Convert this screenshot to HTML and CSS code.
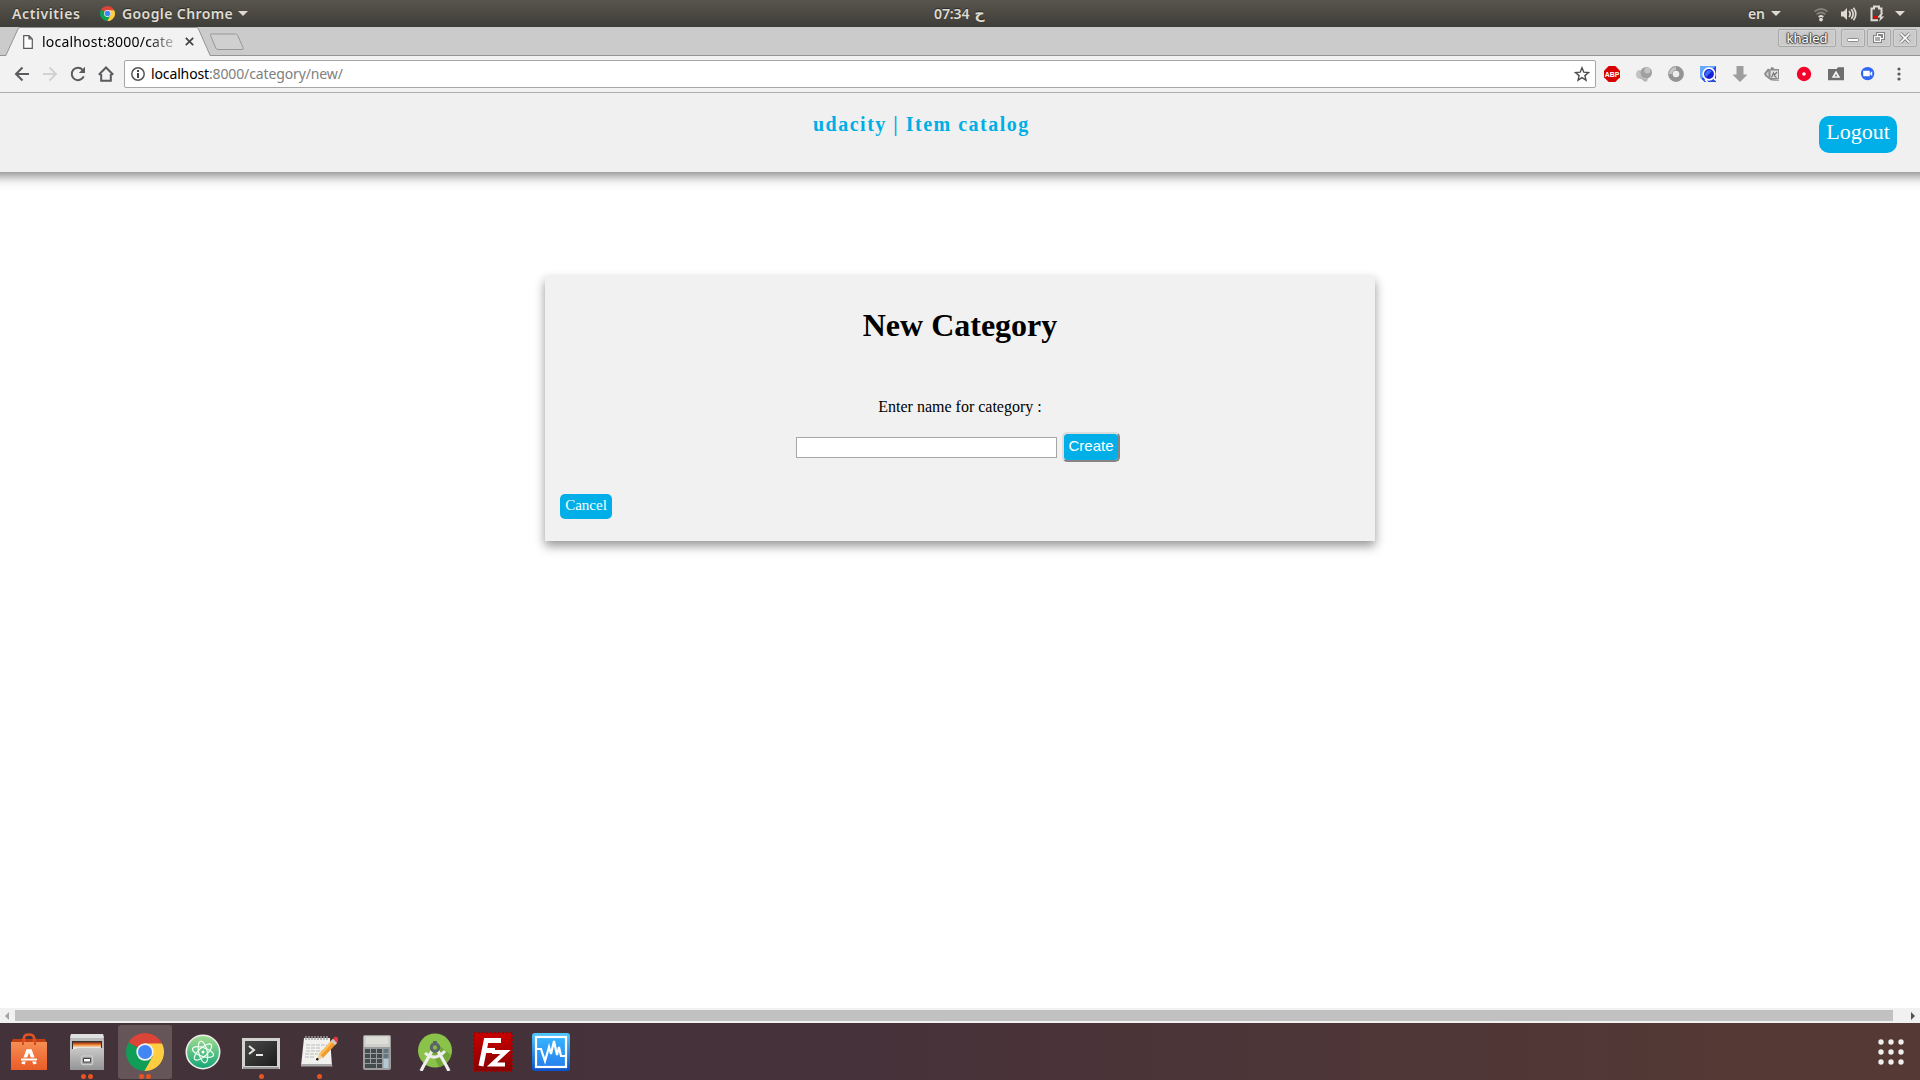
FILE: index.html
```html
<!DOCTYPE html>
<html lang="en">
<head>
<meta charset="utf-8">
<title>Item catalog</title>
<link rel="stylesheet" href="styles.css">
</head>
<body>
<svg width="0" height="0" class="defs">
  <defs>
    <symbol id="chrome" viewBox="0 0 38 38">
      <path d="M19 19 2.6 9.5A19 19 0 0 1 35.4 9.5z" fill="#db4437"/>
      <path d="M19 19 2.6 9.5A19 19 0 0 0 19 38L27.2 23.8z" fill="#0f9d58"/>
      <path d="M19 10.5h17A19 19 0 0 1 18.5 38L26.6 23.5z" fill="#ffcd40"/>
      <circle cx="19" cy="19" r="8.7" fill="#f1f1f1"/>
      <circle cx="19" cy="19" r="7" fill="#4285f4"/>
    </symbol>
    <linearGradient id="orange" x2="0" y2="1"><stop stop-color="#f58e55"/><stop offset=".7" stop-color="#ee6a33"/><stop offset="1" stop-color="#e85d28"/></linearGradient>
    <linearGradient id="silver" x2="0" y2="1"><stop stop-color="#c9c9c9"/><stop offset="1" stop-color="#949494"/></linearGradient>
    <linearGradient id="atom" x2="0" y2="1"><stop stop-color="#a5dd92"/><stop offset="1" stop-color="#12a676"/></linearGradient>
    <linearGradient id="screen" x2="1" y2="1"><stop stop-color="#484848"/><stop offset=".5" stop-color="#333"/><stop offset="1" stop-color="#1d1d1d"/></linearGradient>
    <linearGradient id="red" x2="0" y2="1"><stop stop-color="#c90000"/><stop offset="1" stop-color="#870000"/></linearGradient>
    <linearGradient id="blue" x2="0" y2="1"><stop stop-color="#35b4ff"/><stop offset="1" stop-color="#2580ed"/></linearGradient>
    <linearGradient id="blueEdge" x2="0" y2="1"><stop stop-color="#50c8ff"/><stop offset="1" stop-color="#0b50c8"/></linearGradient>
  </defs>
</svg>

<header class="panel">
  <div class="panel-left">
    <span class="activities">Activities</span>
    <svg class="app-icon" width="15" height="15"><use href="#chrome"/></svg>
    <span class="app-name">Google Chrome</span>
    <i class="caret"></i>
  </div>
  <div class="clock"><span class="time">07:34</span><span class="meridiem">ح</span></div>
  <div class="tray">
    <span class="lang">en</span><i class="caret"></i>
    <svg class="wifi" width="16" height="16" viewBox="0 0 16 16" fill="none" stroke-width="1.8"><path d="M1.5 5.6Q8 .5 14.5 5.6M3.6 8.4Q8 4.7 12.4 8.4" stroke="#85827c"/><path d="M5.7 11Q8 9 10.3 11" stroke="#dfdbd2"/><circle cx="8" cy="13.6" r="1.9" fill="#dfdbd2"/></svg>
    <svg class="sound" width="17" height="16" viewBox="0 0 17 16"><path d="M1 5.5h2.5L7 2v12L3.5 10.5H1z" fill="#dfdbd2"/><path d="M9 5q2.500 3 0 6M11.300 3.300q3.700 4.700 0 9.400M13.500 1.700q4.600 6.300 0 12.600" fill="none" stroke="#dfdbd2" stroke-width="1.700"/></svg>
    <svg class="battery" width="15" height="17" viewBox="0 0 15 17"><path d="M8 15.200H1.500V3.500H4V1.500h5v2h2.500V8" fill="none" stroke="#dfdbd2" stroke-width="2"/><path d="M3 11h4v2.500H3z" fill="#e00000"/><path d="M11 8 7.500 12.500h2.800L9 16.800l5.300-5.200h-3L13 8z" fill="#dfdbd2"/></svg>
    <i class="caret"></i>
  </div>
</header>

<div class="tabstrip">
  <div class="tab">
    <svg class="tab-shape" width="208" height="29" viewBox="0 0 208 29"><path d="M0 29V28.500Q1 28.500 1.500 27L13 2Q13.500.5 15 .5H191Q193 .5 193.500 2L204.500 27Q205 28.500 206 28.500V29z" fill="#f2f2f2" stroke="#949494"/><path d="M1.500 28.500h203" stroke="#f2f2f2" stroke-width="1.200"/></svg>
    <div class="tab-content">
      <svg width="10" height="14" viewBox="0 0 10 14"><path d="M.7.700H6L9.300 4v9.300H.7zM6 .7V4h3.300" fill="#fff" stroke="#5a5a5a" stroke-width="1.200"/></svg>
      <span class="tab-title">localhost:8000/cate</span>
      <svg class="tab-close" width="9" height="9" viewBox="0 0 9 9"><path d="M.8.800l7.400 7.400M8.200.8.800 8.200" stroke="#444" stroke-width="1.700"/></svg>
    </div>
  </div>
  <svg class="new-tab" width="36" height="18" viewBox="0 0 36 18"><path d="M2.500 1h24q1.500 0 2.200 1.500L34 14.500q.7 2-1 2H9q-1.500 0-2.200-1.500L1.500 2.500Q1 1 2.500 1z" fill="#d0d0d0" stroke="#989898"/></svg>
  <div class="window-buttons">
    <span class="user">khaled</span>
    <span class="wbtn"><svg width="12" height="12" viewBox="0 0 12 12"><rect x=".5" y="6.500" width="11" height="3" rx="1" fill="#fff" stroke="#8b8b8b"/></svg></span>
    <span class="wbtn"><svg width="12" height="12" viewBox="0 0 12 12" fill="none"><path d="M4.500 1.500h6v5h-6zM1.500 4.500h6v5h-6z" stroke="#858585" stroke-width="3"/><path d="M4.500 1.500h6v5h-6z" stroke="#fff"/><path d="M1.500 4.500h6v5h-6z" fill="#aaa" stroke="#fff"/></svg></span>
    <span class="wbtn"><svg width="12" height="12" viewBox="0 0 12 12"><path d="M1.500 1.500l9 9m0-9-9 9" stroke="#808080" stroke-width="3.400"/><path d="M1.500 1.500l9 9m0-9-9 9" stroke="#fff" stroke-width="1.700"/></svg></span>
  </div>
</div>

<div class="toolbar">
  <div class="nav">
    <svg width="16" height="16" viewBox="0 0 16 16"><path d="M8.500 1.500 2 8l6.500 6.500M2 8h13" fill="none" stroke="#5a5a5f" stroke-width="2"/></svg>
    <svg width="16" height="16" viewBox="0 0 16 16"><path d="M7.500 1.500 14 8l-6.500 6.500M14 8H1" fill="none" stroke="#d2d2d2" stroke-width="2"/></svg>
    <svg width="16" height="16" viewBox="0 0 16 16"><path d="M13.700 10.300A6.200 6.200 0 1 1 12.600 3.800" fill="none" stroke="#5a5a5f" stroke-width="2"/><path d="M15 .8V7H8.800z" fill="#5a5a5f"/></svg>
    <svg width="16" height="16" viewBox="0 0 16 16"><path d="M.8 8.700 8 1.500l7.200 7.200M3.200 8v6.700h9.600V8" fill="none" stroke="#5a5a5f" stroke-width="2"/></svg>
  </div>
  <div class="omnibox">
    <svg width="14" height="14" viewBox="0 0 14 14"><circle cx="7" cy="7" r="6.200" fill="none" stroke="#555" stroke-width="1.500"/><path d="M6 6h2v5H6zM6 3h2v2H6z" fill="#444"/></svg>
    <span class="url"><b>localhost</b>:8000/category/new/</span>
    <svg class="star" width="16" height="16" viewBox="0 0 16 16"><path d="M8 1.800 9.800 6.200l4.700.4-3.600 3 1.100 4.600L8 11.700l-4 2.500 1.100-4.600-3.600-3 4.700-.4z" fill="none" stroke="#4d4d4d" stroke-width="1.400"/></svg>
  </div>
  <div class="extensions">
    <svg viewBox="0 0 16 16"><path d="M4.700 0h6.600L16 4.700v6.600L11.300 16H4.700L0 11.300V4.700z" fill="#d90000"/><text x="8" y="10.800" text-anchor="middle" class="abp" textLength="14.600" lengthAdjust="spacingAndGlyphs">ABP</text></svg>
    <svg viewBox="0 0 16 16"><path d="M0 8.500Q0 4 4 4l5 3-1 6q-8 1-8-4.500z" fill="#c3c3c3"/><circle cx="10.300" cy="6.600" r="5.700" fill="#a0a0a0"/><circle cx="11.300" cy="4.500" r="3" fill="#c5c5c5"/><path d="M2 9l5 3.500 5-.5-1 3.500H8z" fill="#b5b5b5"/></svg>
    <svg viewBox="0 0 16 16"><circle cx="8" cy="8" r="5.600" fill="#eee" stroke="#949494" stroke-width="4.600"/><path d="M2.500 8A5.500 5.500 0 0 1 8 2.500" fill="none" stroke="#c6c6c6" stroke-width="3"/></svg>
    <svg viewBox="0 0 16 16"><path d="M0 0h16v16H0z" fill="#2649e0"/><path d="M0 0h16L0 14z" fill="#68a8fa"/><circle cx="9" cy="8" r="5.800" fill="#1a22d8" stroke="#fff" stroke-width="1.700"/><path d="M5 9Q5 4 10 4l2 1-6 6z" fill="#3b6ff4"/><path d="M0 11.500 4.500 16H0z" fill="#fff"/><path d="M5 13.500 7.500 16M13.500 12l2.500 2.500" stroke="#fff" stroke-width="1.700"/></svg>
    <svg viewBox="0 0 16 16"><path d="M4.500 0h7v8.500h4L8 16 .5 8.500h4z" fill="#9d9d9d"/></svg>
    <svg viewBox="0 0 16 16"><path d="M0 7.500 4 2.500l2 1L7.500 1l2 .5.8 1.500H15v10l-8 1.500L1 10z" fill="#8c8c8c"/><path d="M6.500 4.500H14v7.500H6.500z" fill="#e1e1e1"/><path d="M7.500 11.500 9.500 7l1 2 2.500-3M10 9.500l2.500 2" fill="none" stroke="#777" stroke-width="1.200"/><path d="M2 8 4.500 5v6z" fill="#d2d2d2"/><path d="M8 13.500h7V15H9z" fill="#aaa"/></svg>
    <svg viewBox="0 0 16 16"><circle cx="8" cy="8" r="7.200" fill="#f4042b"/><circle cx="8" cy="8" r="1.800" fill="#fff"/></svg>
    <svg viewBox="0 0 16 16"><path d="M0 14.300V3h8.500l1.500-1.800h6v13.100z" fill="#6e6e6e"/><path d="M8 6.200 5.200 11h5.600z" fill="none" stroke="#f4f4f4" stroke-width="1.700"/></svg>
    <svg viewBox="0 0 16 16"><circle cx="7.600" cy="7.600" r="6.700" fill="#3165f4"/><path d="M3.200 4.700h5.800q.8 0 .8.800v4.800H4q-.8 0-.8-.8zM10.200 7l2-1.800v4.900l-2-1.800z" fill="#fff"/></svg>
  </div>
  <svg class="menu" width="4" height="14" viewBox="0 0 4 14" fill="#5a5a5a"><circle cx="2" cy="2" r="1.600"/><circle cx="2" cy="7" r="1.600"/><circle cx="2" cy="12" r="1.600"/></svg>
</div>

<div class="viewport">
  <div class="site-header">
    <div class="brand">udacity | Item catalog</div>
    <a class="logout">Logout</a>
  </div>
  <main class="card">
    <h1>New Category</h1>
    <p>Enter name for category :</p>
    <form class="form"><input type="text"><button type="button">Create</button></form>
    <a class="cancel">Cancel</a>
  </main>
</div>
<div class="scrollbar"><i class="arrow left"></i><div class="thumb"></div><i class="arrow right"></i></div>

<footer class="dock">
  <div class="launcher"><svg viewBox="0 0 38 38"><path d="M3 6h32l2 4H1z" fill="#c43f12"/><path d="M14 11V5q0-3.500 5-3.500T24 5v6" fill="none" stroke="#df5425" stroke-width="2.600"/><path d="M1 9h36v28H1z" fill="url(#orange)"/><path d="M13 5v7M25 5v7" stroke="#d94b1c" stroke-width="2"/><path d="M13 31 17.700 18h2.600L25 31" fill="none" stroke="#fff" stroke-width="3.600"/><path d="M11 26.500h16" stroke="#ee6a33" stroke-width="4"/><path d="M11 26.500h16" stroke="#fff" stroke-width="2"/></svg></div>
  <div class="launcher"><svg viewBox="0 0 38 38"><path d="M3 1h32l1 6v30H2V7z" fill="#bcbcbc"/><path d="M3 1h32l1 4H2z" fill="#e0e0e0"/><path d="M4 8h30v9H4z" fill="#36302c"/><path d="M5 9.500h28v2.500H5z" fill="#c9501a"/><path d="M5 11.500h28V14H5z" fill="#f4a256"/><path d="M5 13.500h28V16H5z" fill="#eae6df"/><path d="M2 16h6l1-1h25l2 1v21H2z" fill="url(#silver)"/><rect x="13.500" y="23" width="11" height="8.500" rx="1.500" fill="#999" stroke="#ccc" stroke-width="1.500"/><path d="M15.500 25.500h7v3.500h-7z" fill="#fff" stroke="#444"/></svg><span class="dots"><i></i><i></i></span></div>
  <div class="launcher active"><svg viewBox="0 0 38 38"><use href="#chrome"/></svg><span class="dots"><i></i><i></i></span></div>
  <div class="launcher"><svg viewBox="0 0 38 38"><circle cx="19" cy="19" r="16.700" fill="url(#atom)" stroke="#eee" stroke-width="1.600"/><g fill="none" stroke="#f2fff4" stroke-width="1.200"><ellipse cx="19" cy="19" rx="4.300" ry="11" transform="rotate(-12 19 19)"/><ellipse cx="19" cy="19" rx="4.300" ry="11" transform="rotate(48 19 19)"/><ellipse cx="19" cy="19" rx="4.300" ry="11" transform="rotate(108 19 19)"/></g><circle cx="19" cy="19" r="1.500" fill="#fff"/></svg></div>
  <div class="launcher"><svg viewBox="0 0 38 38"><path d="M0 5h38v31H0z" fill="#d3d3d0"/><path d="M1 34h36v2H1z" fill="#999"/><path d="M3 8h32v25H3z" fill="url(#screen)"/><path d="m7 13 5 4-5 4M14 22h7" fill="none" stroke="#e8e8e8" stroke-width="2"/></svg><span class="dots"><i></i></span></div>
  <div class="launcher"><svg viewBox="0 0 38 38"><path d="M4 5h26l2 28H1z" fill="#f1f1ef"/><path d="M1 31h31l.5 2.500H1z" fill="#aaa"/><path d="M6 3v4m3-4v4m3-4v4m3-4v4m3-4v4m3-4v4m3-4v4m3-4v4" stroke="#a3a3a3" stroke-width="1.400"/><path d="M6 12h21M6 15h14M6 18h18M5 21h13M5 24h10" stroke="#bbb" stroke-dasharray="4 1"/><path d="m19 21 14-15 4 4-14 15z" fill="#ef9b31"/><path d="m19 21 14-15 1.500 1.500L20.500 23z" fill="#ffbe59"/><path d="m33 6 1.500-2q3-1 4 2.500L37 10z" fill="#e63946"/><path d="m31 8 2-2 4 4-2 2z" fill="#ccc"/><path d="m16.500 27 2.500-6 4 4z" fill="#edd1a2"/><circle cx="17.300" cy="26.300" r="1.200" fill="#111"/></svg><span class="dots"><i></i></span></div>
  <div class="launcher"><svg viewBox="0 0 38 38"><rect x="5" y="2" width="28" height="35" rx="2" fill="#9c9c9c"/><rect x="6" y="3" width="26" height="11" fill="#cfcfcb"/><path d="M8 4h22v7H8z" fill="#deded9"/><g fill="#424b4d"><path d="M7 16h5v4H7zm6 0h5v4h-5zm6 0h5v4h-5zM7 21h5v4H7zm6 0h5v4h-5zm6 0h5v4h-5zM7 26h5v4H7zm6 0h5v4h-5zm6 0h5v4h-5zM7 31h11v4H7zm12 0h5v4h-5z"/></g><path d="M25.500 16h5v4h-5zm0 5h5v4h-5z" fill="#667784"/><path d="M25.500 26h5v9h-5z" fill="#b4c7d4"/></svg></div>
  <div class="launcher"><svg viewBox="0 0 38 38"><circle cx="19" cy="17.500" r="17" fill="#8bc34a"/><path d="M19 9 35 22Q31 32 23 34L15 18z" fill="#72a63a"/><path d="M9 20q10 9 20-2" fill="none" stroke="#eee" stroke-width="3"/><path d="m16 18-9 16-2 4M22 18l9 16 2 4" fill="none" stroke="#eee" stroke-width="3.200"/><path d="M17 8h4v3h-4z" fill="#5b6467"/><circle cx="19" cy="14.500" r="3.700" fill="#84b748" stroke="#5b6467" stroke-width="3"/></svg></div>
  <div class="launcher"><svg class="wide" viewBox="0 0 40 40"><path d="M1 1h38v38H1z" fill="url(#red)" stroke="#a50000" stroke-width="2" stroke-dasharray="2 2"/><path d="M8 34 13.200 8.500H28M10.700 18.500H22" fill="none" stroke="#fff" stroke-width="5"/><path d="M19 20h13.500L19 32.500h13" fill="none" stroke="#fff" stroke-width="4"/></svg></div>
  <div class="launcher"><svg viewBox="0 0 38 38"><rect width="38" height="38" rx="3" fill="url(#blueEdge)"/><rect x="4" y="4" width="30" height="30" fill="url(#blue)" stroke="#fff" stroke-width="2.200"/><path d="M4 16h5l4 12 4-14 2 7 3-13 3 14 2-8 2 9h5" fill="none" stroke="#fff" stroke-width="2.200"/></svg></div>
  <svg class="apps" width="26" height="26" viewBox="0 0 26 26" fill="#eeeeec"><circle cx="3" cy="3" r="2.700"/><circle cx="13" cy="3" r="2.700"/><circle cx="23" cy="3" r="2.700"/><circle cx="3" cy="13" r="2.700"/><circle cx="13" cy="13" r="2.700"/><circle cx="23" cy="13" r="2.700"/><circle cx="3" cy="23" r="2.700"/><circle cx="13" cy="23" r="2.700"/><circle cx="23" cy="23" r="2.700"/></svg>
</footer>
</body>
</html>
```
FILE: styles.css
```css
* { box-sizing: border-box; }
body { margin: 0; width: 1920px; height: 1080px; overflow: hidden; display: flex; flex-direction: column; background: #fff; font-family: "Liberation Serif", serif; }
svg { display: block; flex: none; }
.defs { position: absolute; }

/* desktop panel */
.panel { height: 27px; flex: none; display: grid; grid-template-columns: 1fr auto 1fr; align-items: center; background: linear-gradient(#58554d, #3f3d38); color: #dfdbd2; font: 600 14px/26px "Noto Sans", sans-serif; text-shadow: 0 -1px 1px #2b2a27; }
.panel-left { display: flex; align-items: center; padding-left: 12px; }
.activities { width: 88px; letter-spacing: .6px; }
.app-name { margin-left: 7px; width: 116px; letter-spacing: .4px; white-space: nowrap; }
.caret { border: 5px solid transparent; border-top-color: #dfdbd2; border-bottom: 0; }
.clock { display: flex; gap: 5px; width: 52px; }
.time { font-size: 14px; letter-spacing: -.1px; line-height: 25px; }
.meridiem { font-family: "DejaVu Sans", sans-serif; font-size: 14px; }
.tray { display: flex; align-items: center; justify-content: flex-end; padding-right: 15px; }
.lang { margin-right: 6px; }
.wifi { margin-left: 32px; }
.sound { margin-left: 11px; }
.battery { margin: 0 10px 0 13px; }

/* tab strip */
.tabstrip { height: 29px; flex: none; display: flex; background: #cbcbcb; box-shadow: inset 0 -1px #949494; }
.tab { position: relative; width: 206px; height: 29px; margin-left: 5px; }
.tab-shape { position: absolute; left: 0; top: 0; }
.tab-content { position: relative; display: flex; align-items: center; height: 29px; padding-left: 18px; }
.tab-title { margin-left: 9px; width: 134px; overflow: hidden; white-space: nowrap; font: 14px/28px "Noto Sans", sans-serif; letter-spacing: .2px; color: #000; -webkit-mask-image: linear-gradient(90deg, #000 78%, transparent 105%); }
.tab-close { margin-left: 9px; }
.new-tab { margin: 6px 0 0 -2px; }
.window-buttons { margin: 2px 3px 0 auto; display: flex; gap: 2px; }
.window-buttons span { height: 18px; border: 1px solid #a8a8a8; border-radius: 2px; display: flex; align-items: center; justify-content: center; box-shadow: inset 0 0 0 1px #d4d4d4; }
.window-buttons .user { width: 58px; margin-right: 3px; color: #fff; font: 13px/16px "Noto Sans", sans-serif; text-shadow: 1px 0 1px #444, -1px 0 1px #444, 0 1px 1px #444, 0 -1px 1px #444; }
.wbtn { width: 24px; }

/* toolbar */
.toolbar { height: 37px; flex: none; display: flex; align-items: center; background: #f2f2f2; border-bottom: 1px solid #adadad; }
.nav { display: flex; gap: 12px; width: 124px; padding-left: 14px; }
.omnibox { width: 1472px; height: 28px; padding: 0 5px 0 6px; display: flex; align-items: center; background: #fff; border: 1px solid #a6a6a6; border-radius: 2px; }
.url { margin-left: 6px; font: 14px/26px "Noto Sans", sans-serif; color: #808080; letter-spacing: -.13px; }
.url b { font-weight: 400; color: #000; }
.star { margin-left: auto; }
.extensions { display: flex; gap: 16px; margin-left: 8px; }
.extensions svg { width: 16px; height: 16px; }
.abp { font: bold 8px "Liberation Sans", sans-serif; fill: #fff; }
.menu { margin-left: 21px; }

/* page */
.viewport { height: 915px; flex: none; overflow: hidden; background: #fff; }
.site-header { height: 79px; margin: 0 -20px; padding: 0 43px 0 20px; display: flex; justify-content: space-between; background: #f0f0f0; box-shadow: 0 3px 12px rgba(0, 0, 0, .55); }
.brand { padding: 19px 0 0 813px; font-size: 20px; line-height: 24px; font-weight: bold; letter-spacing: 1.5px; color: #00aee6; }
.logout { margin-top: 23px; width: 78px; height: 37px; border-radius: 10px; background: #00afe8; color: #fff; font-size: 22px; line-height: 32px; text-align: center; }
.card { width: 830px; height: 265px; margin: 104px auto 0; padding: 28px 15px 0; background: #f1f1f1; box-shadow: 0 5px 10px rgba(0, 0, 0, .42); display: flex; flex-direction: column; text-align: center; }
h1 { margin: 0; font-size: 32px; line-height: 42px; }
p { margin: 51px 0 0; font-size: 16px; line-height: 20px; }
.form { display: flex; justify-content: center; align-items: center; gap: 5px; margin: 15px 4px 0 0; }
.form input { width: 261px; height: 21px; padding: 1px; border: 1px solid #a6a6a6; background: #fff; }
.form button { width: 58px; height: 30px; padding: 0 0 3px; border: 2px solid; border-color: #ddd #858585 #858585 #ddd; border-radius: 5px; background: #00afe8; background-clip: padding-box; color: #fff; font: 15px "Liberation Sans", sans-serif; }
.cancel { width: 52px; height: 25px; margin-top: 32px; border-radius: 5px; background: #00afe8; color: #fff; font-size: 15px; line-height: 22px; }
.scrollbar { height: 15px; flex: none; display: flex; align-items: center; background: #f1f1f1; }
.thumb { width: 1878px; height: 11px; background: #c1c1c1; }
.arrow { border: 4px solid transparent; }
.left { border-left: 0; border-right-color: #a3a3a3; margin: 0 6px 0 5px; }
.right { border-right: 0; border-left-color: #505050; margin-left: 18px; }

/* dock */
.dock { height: 57px; flex: none; display: flex; align-items: center; background: linear-gradient(90deg, #433239, #46323a 45%, #543935 90%); }
.launcher { position: relative; width: 54px; height: 54px; margin: 0 2px; display: flex; align-items: center; justify-content: center; border-radius: 3px; }
.launcher svg { width: 38px; height: 38px; }
.launcher .wide { width: 40px; height: 40px; }
.active { background: #655559; }
.dots { position: absolute; left: 0; right: 0; bottom: 0; display: flex; justify-content: center; gap: 2px; }
.dots i { width: 5px; height: 5px; border-radius: 50%; background: #e95420; }
.apps { margin: 0 16px 0 auto; }
```
